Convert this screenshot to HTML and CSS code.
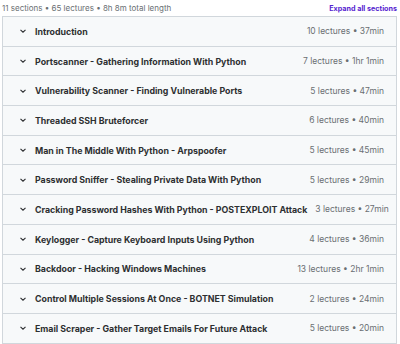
FILE: index.html
```html
<!DOCTYPE html>
<html lang="en">

<head>
    <meta charset="UTF-8">
    <meta name="viewport" content="width=device-width, initial-scale=1.0">
    <title>Course content</title>
    <link rel="stylesheet" href="styles.css">
</head>

<body>
    <div class="curriculum">
        <div class="curriculum-header">
            <span class="summary">11 sections • 65 lectures • 8h 8m total length</span>
            <a href="#" class="expand-all">Expand all sections</a>
        </div>

        <div class="section-list">
            <div class="section">
                <span class="chevron"><svg viewBox="0 0 10 10"><path d="M2.5 3.8 L5 6.2 L7.5 3.8"/></svg></span>
                <span class="section-title">Introduction</span>
                <span class="section-meta">10 lectures • 37min</span>
            </div>
            <div class="section">
                <span class="chevron"><svg viewBox="0 0 10 10"><path d="M2.5 3.8 L5 6.2 L7.5 3.8"/></svg></span>
                <span class="section-title">Portscanner - Gathering Information With Python</span>
                <span class="section-meta">7 lectures • 1hr 1min</span>
            </div>
            <div class="section">
                <span class="chevron"><svg viewBox="0 0 10 10"><path d="M2.5 3.8 L5 6.2 L7.5 3.8"/></svg></span>
                <span class="section-title">Vulnerability Scanner - Finding Vulnerable Ports</span>
                <span class="section-meta">5 lectures • 47min</span>
            </div>
            <div class="section">
                <span class="chevron"><svg viewBox="0 0 10 10"><path d="M2.5 3.8 L5 6.2 L7.5 3.8"/></svg></span>
                <span class="section-title">Threaded SSH Bruteforcer</span>
                <span class="section-meta">6 lectures • 40min</span>
            </div>
            <div class="section">
                <span class="chevron"><svg viewBox="0 0 10 10"><path d="M2.5 3.8 L5 6.2 L7.5 3.8"/></svg></span>
                <span class="section-title">Man in The Middle With Python - Arpspoofer</span>
                <span class="section-meta">5 lectures • 45min</span>
            </div>
            <div class="section">
                <span class="chevron"><svg viewBox="0 0 10 10"><path d="M2.5 3.8 L5 6.2 L7.5 3.8"/></svg></span>
                <span class="section-title">Password Sniffer - Stealing Private Data With Python</span>
                <span class="section-meta">5 lectures • 29min</span>
            </div>
            <div class="section">
                <span class="chevron"><svg viewBox="0 0 10 10"><path d="M2.5 3.8 L5 6.2 L7.5 3.8"/></svg></span>
                <span class="section-title">Cracking Password Hashes With Python - POSTEXPLOIT Attack</span>
                <span class="section-meta">3 lectures • 27min</span>
            </div>
            <div class="section">
                <span class="chevron"><svg viewBox="0 0 10 10"><path d="M2.5 3.8 L5 6.2 L7.5 3.8"/></svg></span>
                <span class="section-title">Keylogger - Capture Keyboard Inputs Using Python</span>
                <span class="section-meta">4 lectures • 36min</span>
            </div>
            <div class="section">
                <span class="chevron"><svg viewBox="0 0 10 10"><path d="M2.5 3.8 L5 6.2 L7.5 3.8"/></svg></span>
                <span class="section-title">Backdoor - Hacking Windows Machines</span>
                <span class="section-meta">13 lectures • 2hr 1min</span>
            </div>
            <div class="section">
                <span class="chevron"><svg viewBox="0 0 10 10"><path d="M2.5 3.8 L5 6.2 L7.5 3.8"/></svg></span>
                <span class="section-title">Control Multiple Sessions At Once - BOTNET Simulation</span>
                <span class="section-meta">2 lectures • 24min</span>
            </div>
            <div class="section">
                <span class="chevron"><svg viewBox="0 0 10 10"><path d="M2.5 3.8 L5 6.2 L7.5 3.8"/></svg></span>
                <span class="section-title">Email Scraper - Gather Target Emails For Future Attack</span>
                <span class="section-meta">5 lectures • 20min</span>
            </div>
        </div>
    </div>
</body>

</html>
```

FILE: styles.css
```css
body {
    font-family: Inter, "Noto Sans", sans-serif;
    color: #2d2f31;
    background: #fff;
    margin: 0;
    padding: 0;
    overflow: hidden;
}

.curriculum {
    padding: 0 3px 0 2px;
}

.curriculum-header {
    display: flex;
    justify-content: space-between;
    align-items: center;
    height: 16px;
    font-size: 8px;
}

.summary {
    color: #6a6f73;
}

.expand-all {
    color: #5624d0;
    font-size: 7.2px;
    font-weight: 700;
    text-decoration: none;
}

.section-list {
    border: 1px solid #d1d7dc;
    border-bottom: none;
}

.section {
    display: flex;
    align-items: center;
    gap: 8px;
    height: 28.7px;
    padding: 0 12px 0 15px;
    background: #f7f9fa;
    border-bottom: 1px solid #d1d7dc;
}

.chevron {
    display: flex;
    width: 10px;
    height: 10px;
    margin-right: -1px;
}

.chevron svg {
    width: 10px;
    height: 10px;
    fill: none;
    stroke: #2d2f31;
    stroke-width: 1.1;
}

.section-title {
    flex: 1;
    font-size: 8.8px;
    font-weight: 700;
    white-space: nowrap;
}

.section-meta {
    font-size: 8.5px;
    color: #6a6f73;
    white-space: nowrap;
}
```
